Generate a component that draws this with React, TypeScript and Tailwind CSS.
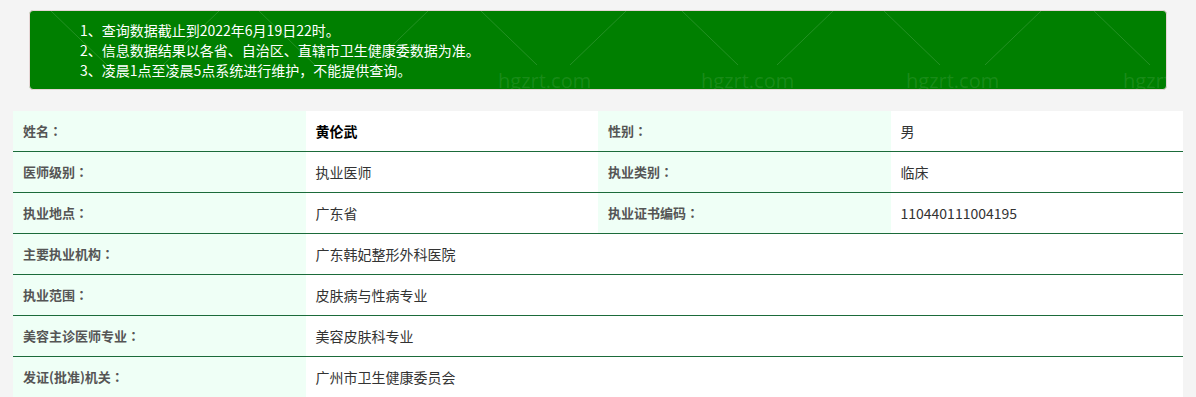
import React from "react";

const rows: { label: string; value: string; label2?: string; value2?: string; bold?: boolean }[] = [
  { label: "姓名", value: "黄伦武", label2: "性别", value2: "男", bold: true },
  { label: "医师级别", value: "执业医师", label2: "执业类别", value2: "临床" },
  { label: "执业地点", value: "广东省", label2: "执业证书编码", value2: "110440111004195" },
  { label: "主要执业机构", value: "广东韩妃整形外科医院" },
  { label: "执业范围", value: "皮肤病与性病专业" },
  { label: "美容主诊医师专业", value: "美容皮肤科专业" },
  { label: "发证(批准)机关", value: "广州市卫生健康委员会" },
];

const backs = [50, 258, 480, 681, 883, 1093];
const slashes = [218, 427, 625, 832, 1040, 1245];
const marks = [497, 700, 905, 1122];

function Watermark() {
  return (
    <svg className="pointer-events-none absolute inset-0 h-full w-full" aria-hidden="true">
      {backs.map((x) => (
        <line key={"b" + x} x1={x - 29} y1={0} x2={x - 29 + 56} y2={54} stroke="rgba(255,255,255,0.14)" strokeWidth={1} />
      ))}
      {slashes.map((x) => (
        <line key={"s" + x} x1={x - 29} y1={0} x2={x - 29 - 56} y2={54} stroke="rgba(255,255,255,0.14)" strokeWidth={1} />
      ))}
      {marks.map((x) => (
        <text
          key={"t" + x}
          x={x - 29}
          y={77}
          fill="rgba(255,255,255,0.10)"
          fontSize={20}
          fontFamily="'Open Sans', sans-serif"
        >
          hgzrt.com
        </text>
      ))}
    </svg>
  );
}

function Label({ text }: { text: string }) {
  return (
    <div className="flex items-center bg-[#effff6] pl-[10px] text-[13px] font-bold text-[#555]">
      <span>{text}</span>
      <span style={{ fontFamily: "'Noto Sans CJK TC', sans-serif" }}>：</span>
    </div>
  );
}

export default function App() {
  return (
    <div
      className="min-h-[397px] w-full bg-[#f4f4f4] px-[13px] pt-[10px]"
      style={{ fontFamily: "'Noto Sans CJK SC', 'Noto Sans', sans-serif" }}
    >
      <div className="relative mx-4 h-[80px] overflow-hidden rounded-[4px] border border-[#e6d6d6] bg-[#007f00] py-[9px] pl-[50px] text-[14px] leading-[20px] text-white">
        <Watermark />
        <p className="relative">1、查询数据截止到2022年6月19日22时。</p>
        <p className="relative">2、信息数据结果以各省、自治区、直辖市卫生健康委数据为准。</p>
        <p className="relative">3、凌晨1点至凌晨5点系统进行维护，不能提供查询。</p>
      </div>

      <div className="mt-[21px] bg-white">
        {rows.map((r, i) => (
          <div key={i} className="grid h-[41px] grid-cols-4 border-b border-[#1b6b3a]">
            <Label text={r.label} />
            {r.label2 ? (
              <>
                <div className={`flex items-center pl-[10px] text-[14px] ${r.bold ? "font-bold text-black" : "text-[#333]"}`}>
                  {r.value}
                </div>
                <Label text={r.label2} />
                <div className="flex items-center pl-[10px] text-[14px] text-[#333]">{r.value2}</div>
              </>
            ) : (
              <div className="col-span-3 flex items-center pl-[10px] text-[14px] text-[#333]">{r.value}</div>
            )}
          </div>
        ))}
      </div>
    </div>
  );
}
